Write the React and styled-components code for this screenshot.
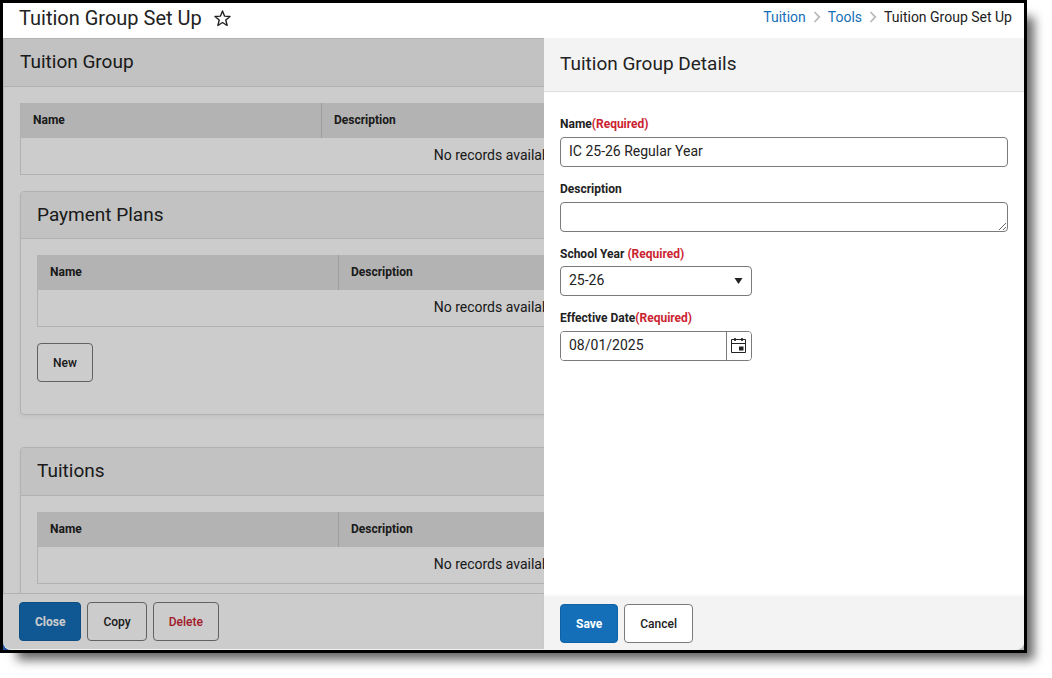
import React from "react";
import styled, { createGlobalStyle } from "styled-components";

const GlobalStyle = createGlobalStyle`
  *, *::before, *::after { box-sizing: border-box; }
  body {
    margin: 0;
    background: #fff;
    color: #222;
    font: 14px/20px Roboto, "Liberation Sans", sans-serif;
  }
  h1, h2, h3 { margin: 0; font-size: 19px; line-height: 24px; font-weight: 400; }
  h1 { font-size: 20px; }
  button, input, select, textarea { font-family: inherit; color: inherit; margin: 0; }
`;

const Frame = styled.div`
  height: calc(100vh - 25px);
  min-height: 400px;
  margin: 0 25px 25px 0;
  border: 3px solid #000;
  background: linear-gradient(90deg, #1b4f9c 50%, #b4b9b6 50%);
  box-shadow: 12px 12px 10px -5px rgba(0, 0, 0, 0.6);
`;

const Window = styled.div`
  height: 100%;
  display: flex;
  flex-direction: column;
  overflow: hidden;
  background: #fff;
  border-bottom: 1px solid #eef2ef;
  border-radius: 0 0 8px 8px;
`;

const TopBar = styled.header`
  display: flex;
  justify-content: space-between;
  height: 35px;
  flex: none;
  padding: 3px 12px 0 16px;
`;

const PageTitle = styled.div`
  display: flex;
  align-items: center;
  gap: 12px;
  height: 24px;
`;

const StarButton = styled.button`
  display: flex;
  padding: 0;
  border: 0;
  background: none;
`;

const Breadcrumbs = styled.nav`
  display: flex;
  align-items: center;
  gap: 8px;
  height: 22px;
  a { color: #146fb8; text-decoration: none; }
  svg { overflow: visible; }
`;

const Body = styled.div`
  position: relative;
  flex: 1;
  min-height: 0;
  display: flex;
  flex-direction: column;
`;

const Main = styled.main`
  flex: 1;
  min-height: 0;
  overflow: hidden;
  border: 1px solid #dfdfdf;
  border-width: 1px 0 0 1px;
`;

const SectionHeader = styled.div`
  padding: 11px 16px ${(p) => (p.$nested ? 11 : 12)}px;
  background: #f3f3f3;
  border-bottom: 1px solid #dedede;
`;

const Content = styled.div`
  padding: 16px 46px 16px 16px;
`;

const Panel = styled.section`
  margin: 16px 0 32px;
  border: 1px solid #dedede;
  border-radius: 4px;
  box-shadow: 0 2px 4px rgba(0, 0, 0, 0.05);
  overflow: hidden;
`;

const PanelBody = styled.div`
  padding: 16px 16px 32px;
`;

const Grid = styled.table`
  width: 100%;
  table-layout: fixed;
  border-spacing: 0;
  border: 1px solid #dedede;
  border-top: 0;
  th {
    height: 35px;
    padding: 0 12px 2px;
    background: #e0e0e0;
    border-left: 1px solid #c6c6c6;
    text-align: left;
    font-size: 12px;
    font-weight: 700;
  }
  th:first-child { width: 300px; border-left: 0; }
  td { height: 36px; padding: 0 0 2px; text-align: center; }
`;

const Button = styled.button`
  height: 39px;
  padding: 0 15px;
  border: 1px solid ${(p) => (p.$primary ? "#0f62a5" : "#7b7b7b")};
  border-radius: 4px;
  background: ${(p) => (p.$primary ? "#146fb8" : "#fff")};
  color: ${(p) => (p.$primary ? "#fff" : p.$danger ? "#cb2431" : "#222")};
  font-size: 12px;
  font-weight: ${(p) => (p.$primary ? 700 : 500)};
`;

const NewRow = styled.div`
  margin-top: 16px;
`;

const Footer = styled.footer`
  flex: none;
  display: flex;
  gap: 6px;
  padding: 8px 16px;
  border-top: 1px solid #dedede;
`;

const Backdrop = styled.div`
  position: absolute;
  inset: 0;
  background: rgba(0, 0, 0, 0.2);
`;

const Drawer = styled.aside`
  position: absolute;
  inset: 0 0 0 auto;
  width: 480px;
  max-width: 100%;
  display: flex;
  flex-direction: column;
  background: #fff;
`;

const DrawerHeader = styled.div`
  padding: 14px 16px 15px;
  background: #f3f3f3;
  border-bottom: 1px solid #dedede;
`;

const Form = styled.form`
  flex: 1;
  min-height: 0;
  display: flex;
  flex-direction: column;
  gap: 14px;
  padding: 24px 16px;
`;

const DrawerFooter = styled.div`
  display: flex;
  gap: 6px;
  padding: 8px 16px 6px;
  background: #f3f3f3;
  box-shadow: 0 -1px 3px rgba(0, 0, 0, 0.04);
`;

const Field = styled.div`
  display: flex;
  flex-direction: column;
  align-items: flex-start;
  gap: ${(p) => (p.$tight ? 4 : 5)}px;
`;

const Label = styled.label`
  font-size: 12px;
  line-height: 16px;
  font-weight: 700;
`;

const Required = styled.span`
  color: #cb2431;
`;

const TextInput = styled.input`
  width: 100%;
  height: 30px;
  padding: 0 8px 2px;
  border: 1px solid #7b7b7b;
  border-radius: 4px;
  background: #fff;
  font-size: 14px;
`;

const TextArea = styled.textarea`
  display: block;
  width: 100%;
  height: 30px;
  padding: 4px 8px;
  border: 1px solid #7b7b7b;
  border-radius: 4px;
  font-size: 14px;
  overflow: hidden;
  resize: vertical;
`;

const SelectWrap = styled.div`
  position: relative;
  width: 192px;
  svg { position: absolute; right: 9px; top: 12px; pointer-events: none; }
`;

const Select = styled.select`
  display: block;
  width: 100%;
  height: 30px;
  padding: 0 24px 2px 8px;
  border: 1px solid #7b7b7b;
  border-radius: 4px;
  background: #fff;
  appearance: none;
  font-size: 14px;
`;

const DateGroup = styled.div`
  display: flex;
  width: 192px;
  height: 30px;
  border: 1px solid #7b7b7b;
  border-radius: 4px;
  overflow: hidden;
`;

const DateInput = styled.input`
  flex: 1;
  min-width: 0;
  padding: 0 8px 2px;
  border: 0;
  font-size: 14px;
`;

const CalendarButton = styled.button`
  display: flex;
  align-items: center;
  justify-content: center;
  width: 25px;
  padding: 0 1px 2px 0;
  border: 0;
  border-left: 1px solid #7b7b7b;
  background: #fff;
`;

const Chevron = () => (
  <svg width="6" height="12" viewBox="0 0 6 12" fill="none" stroke="#b9b9b9" strokeWidth="1.8" aria-hidden="true">
    <path d="M.5 1l4.800 5L.5 11" />
  </svg>
);

const Star = () => (
  <svg width="17" height="17" viewBox="0 0 17 17" fill="none" stroke="#222" strokeWidth="1.4" strokeLinejoin="round" aria-hidden="true">
    <path d="M8.500 1l2 5.100 5.500.4-4.200 3.500 1.300 5.500-4.600-3-4.600 3 1.300-5.500L1 6.500l5.500-.4z" />
  </svg>
);

const Calendar = () => (
  <svg width="15" height="16" viewBox="0 0 15 16" aria-hidden="true">
    <path d="M.5 2.500h14v13H.5zM.5 6.500h14" fill="none" stroke="#222" strokeWidth="1" />
    <path d="M3 1.500h2v2H3zM10 1.500h2v2h-2zM8 9.500h4.500v4H8z" fill="#222" />
    <path d="M4 1v3M11 1v3M2 2.500h4M9 2.500h4" stroke="#222" strokeWidth="1.200" />
  </svg>
);

const Records = () => (
  <Grid>
    <thead>
      <tr>
        <th scope="col">Name</th>
        <th scope="col">Description</th>
      </tr>
    </thead>
    <tbody>
      <tr>
        <td colSpan={2}>No records available.</td>
      </tr>
    </tbody>
  </Grid>
);

export default function App() {
  return (
    <>
      <GlobalStyle />
      <Frame>
        <Window>
          <TopBar>
            <PageTitle>
              <h1>Tuition Group Set Up</h1>
              <StarButton aria-label="Add to favorites">
                <Star />
              </StarButton>
            </PageTitle>
            <Breadcrumbs aria-label="Breadcrumb">
              <a href="#tuition">Tuition</a>
              <Chevron />
              <a href="#tools">Tools</a>
              <Chevron />
              <span>Tuition Group Set Up</span>
            </Breadcrumbs>
          </TopBar>
          <Body>
            <Main>
              <SectionHeader>
                <h2>Tuition Group</h2>
              </SectionHeader>
              <Content>
                <Records />
                <Panel>
                  <SectionHeader $nested>
                    <h3>Payment Plans</h3>
                  </SectionHeader>
                  <PanelBody>
                    <Records />
                    <NewRow>
                      <Button>New</Button>
                    </NewRow>
                  </PanelBody>
                </Panel>
                <Panel>
                  <SectionHeader>
                    <h3>Tuitions</h3>
                  </SectionHeader>
                  <PanelBody>
                    <Records />
                  </PanelBody>
                </Panel>
              </Content>
            </Main>
            <Footer>
              <Button $primary>Close</Button>
              <Button>Copy</Button>
              <Button $danger>Delete</Button>
            </Footer>
            <Backdrop />
            <Drawer aria-label="Tuition Group Details">
              <DrawerHeader>
                <h2>Tuition Group Details</h2>
              </DrawerHeader>
              <Form id="details" onSubmit={(e) => e.preventDefault()}>
                <Field>
                  <Label htmlFor="name">
                    Name<Required>(Required)</Required>
                  </Label>
                  <TextInput id="name" type="text" defaultValue="IC 25-26 Regular Year" />
                </Field>
                <Field>
                  <Label htmlFor="description">Description</Label>
                  <TextArea id="description" rows={1} />
                </Field>
                <Field $tight>
                  <Label htmlFor="year">
                    School Year <Required>(Required)</Required>
                  </Label>
                  <SelectWrap>
                    <Select id="year" defaultValue="25-26">
                      <option>25-26</option>
                    </Select>
                    <svg width="9" height="6" viewBox="0 0 9 6" aria-hidden="true">
                      <path d="M.5 0h8L4.500 6z" fill="#222" />
                    </svg>
                  </SelectWrap>
                </Field>
                <Field>
                  <Label htmlFor="date">
                    Effective Date<Required>(Required)</Required>
                  </Label>
                  <DateGroup>
                    <DateInput id="date" type="text" defaultValue="08/01/2025" />
                    <CalendarButton type="button" aria-label="Open calendar">
                      <Calendar />
                    </CalendarButton>
                  </DateGroup>
                </Field>
              </Form>
              <DrawerFooter>
                <Button $primary type="submit" form="details">
                  Save
                </Button>
                <Button type="button">Cancel</Button>
              </DrawerFooter>
            </Drawer>
          </Body>
        </Window>
      </Frame>
    </>
  );
}
